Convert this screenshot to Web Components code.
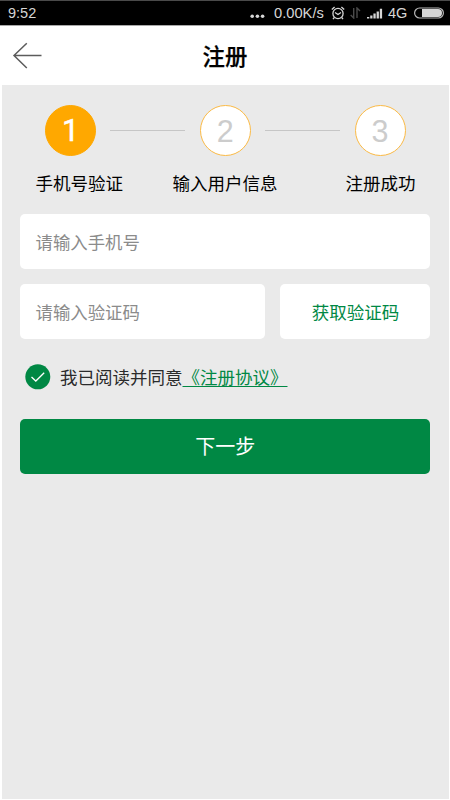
<!DOCTYPE html>
<html lang="zh-CN">
<head>
<meta charset="utf-8">
<title>注册</title>
<style>
html,body{margin:0;height:100%;overflow:hidden;background:#fff}
body{font-family:"Noto Sans CJK SC",sans-serif;color:#000}
</style>
</head>
<body>
<register-app></register-app>
<script>
const define = (name, html) => customElements.define(name, class extends HTMLElement {
  constructor() {
    super();
    const t = document.createElement('template');
    t.innerHTML = html;
    this.attachShadow({mode: 'open'}).append(t.content.cloneNode(true));
  }
});

define('status-bar', `<style>
:host{display:flex;align-items:center;box-sizing:border-box;height:26px;padding:1px 6px 1px 8px;background:#000;border-top:1px solid #4a4a4a;border-bottom:1px solid #a8a8a8;color:#d6d6d6;font:14.5px/24px "Liberation Sans",sans-serif;white-space:nowrap}
.dots{margin-left:auto;margin-right:9px}
.rate{width:51px;margin-right:6px;font-size:14.7px}
.clock{margin-right:5px}.data{margin-right:6px}.sig{margin-right:5px}
.net{width:21px;margin-right:5px;font-size:14.5px}
svg{display:block;flex:none}
</style>
<span>9:52</span>
<svg class="dots" width="15" height="14" fill="#d6d6d6"><circle cx="2.2" cy="10.2" r="1.8"/><circle cx="7.4" cy="10.2" r="1.8"/><circle cx="12.6" cy="10.2" r="1.8"/></svg>
<span class="rate">0.00K/s</span>
<svg class="clock" width="14" height="14" fill="none" stroke="#d6d6d6" stroke-width="1.3"><circle cx="7" cy="7.5" r="5.1"/><path d="M4 6.5l3 2 3-2M.8 3.6L3.6 1M13.2 3.6L10.4 1M3.3 11.5l-1.3 1.7M10.7 11.5l1.3 1.7"/></svg>
<svg class="data" width="11" height="12" fill="none" stroke="#4b4b4b" stroke-width="1.4"><path d="M3.7 1v10L.7 8M7 11V1l3 3"/></svg>
<svg class="sig" width="16" height="12" fill="#d6d6d6"><path d="M0 10h2.3v1.6H0zM3.2 8.6h2.3v3H3.2zM6.4 6.6h2.3v5H6.4zM9.6 4.4h2.3v7.2H9.6zM12.8 1.8h2.3v9.8h-2.3z"/></svg>
<span class="net">4G</span>
<svg width="30" height="12"><rect x=".6" y="1" width="28.8" height="10" rx="5" fill="none" stroke="#b8b8b8" stroke-width="1.2"/><path d="M8 2h16a4 4 0 0 1 0 8H8z" fill="#d6d6d6"/></svg>`);

define('nav-bar', `<style>
:host{display:grid;grid-template-columns:60px 1fr 60px;align-items:center;height:59px;background:#fff}
svg{display:block;margin-left:12px}
.t{margin-top:-1px;text-align:center;font-size:22.4px;line-height:32px;font-weight:500;-webkit-text-stroke:.25px #000}
</style>
<svg width="30" height="28" fill="none" stroke="#5c5c5c" stroke-width="1.5"><path d="M29.5 13.5H2M14.8 1.2L2 13.5 14.8 26"/></svg>
<div class="t"><slot></slot></div>`);

define('step-badge', `<style>
:host{display:flex;align-items:center;justify-content:center;box-sizing:border-box;width:51px;height:51px;border:1.5px solid #fbba45;border-radius:50%;background:#fff;color:#ccc;font:30.5px/48px "Liberation Sans",sans-serif}
:host([active]){background:#ffa800;border-color:#ffa800;color:#fff;font-family:Roboto,sans-serif}
:host([active]) span{-webkit-text-stroke:.5px #fff}
</style><span><slot></slot></span>`);

define('step-progress', `<style>
:host{display:block}
.row{display:flex;align-items:center;justify-content:space-between;padding:20px 43.5px 0 43px}
i{width:75px;height:1px;background:#c6c6c6}
.labels{display:grid;grid-template-columns:137px 173px auto;padding:14px 0 0 33.5px;font-size:17.5px;line-height:26px}
</style>
<div class="row"><step-badge active>1</step-badge><i></i><step-badge>2</step-badge><i></i><step-badge>3</step-badge></div>
<div class="labels"><span>手机号验证</span><span>输入用户信息</span><span>注册成功</span></div>`);

define('text-field', `<style>
:host{display:flex;align-items:center;box-sizing:border-box;height:55px;padding:0 15.5px;border-radius:5px;background:#fff;color:#8b8b8b;font-size:17.4px;line-height:26px}
</style><slot></slot>`);

define('action-button', `<style>
:host{display:flex;align-items:center;justify-content:center;box-sizing:border-box;height:55px;border-radius:5px;background:#fff;color:#008844;font-size:17.5px;line-height:26px}
:host([primary]){background:#008844;color:#fff;font-size:20px}
</style><slot></slot>`);

define('agree-row', `<style>
:host{display:flex;align-items:center;height:26px;font-size:17.5px;line-height:26px;color:#2b2b2b}
svg{display:block;margin:0 9px 0 5px}
u{color:#008844;text-decoration-thickness:1px;text-underline-offset:2px}
</style>
<svg width="26" height="26"><circle cx="12.8" cy="12.8" r="12.5" fill="#008844"/><path d="M6.5 13l4.3 4L19.2 8.7" fill="none" stroke="#fff" stroke-width="1.3"/></svg>
<span>我已阅读并同意<u>《注册协议》</u></span>`);

define('register-app', `<style>
:host{display:flex;flex-direction:column;height:800px;width:450px}
main{flex:1;margin:0 1px 1px 2px;background:#eaeaea}
.form{display:grid;grid-template-columns:245.3px 150.2px;column-gap:15px;row-gap:15px;padding:18.4px 18px 0}
.wide{grid-column:1/-1}
agree-row{margin-top:9.5px}
.next{margin-top:14px}
</style>
<status-bar></status-bar><nav-bar>注册</nav-bar>
<main><step-progress></step-progress>
<div class="form">
<text-field class="wide">请输入手机号</text-field>
<text-field>请输入验证码</text-field><action-button>获取验证码</action-button>
<agree-row class="wide"></agree-row>
<action-button class="wide next" primary>下一步</action-button>
</div></main>`);
</script>
</body>
</html>
